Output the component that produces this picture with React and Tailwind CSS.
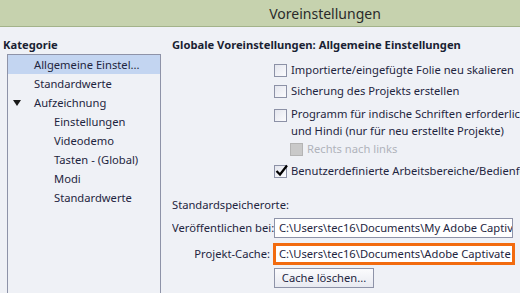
import React from 'react';

const font = { fontFamily: '"Noto Sans", "Open Sans", sans-serif' };

const Check = ({ checked, disabled }) => (
    <span
        className={`block relative shrink-0 w-[13px] h-[13px] border ${disabled ? 'border-[#b4b4b4] bg-[#c9c9c9]' : 'border-[#8c91a6] bg-gradient-to-br from-[#e4e6ee] to-[#fbfbfd]'}`}
    >
        {checked && (
            <svg className="absolute -left-[1px] -top-[3px]" width="15" height="15" viewBox="0 0 15 15">
                <path d="M2.5 8 L6 11.5 L13 2.5" fill="none" stroke="#000" strokeWidth="2.2" />
            </svg>
        )}
    </span>
);

const Tree = [
    { label: 'Allgemeine Einstel...', indent: 'pl-[26px]', selected: true },
    { label: 'Standardwerte', indent: 'pl-[26px]' },
    { label: 'Aufzeichnung', indent: 'pl-[26px]', open: true },
    { label: 'Einstellungen', indent: 'pl-[46px]' },
    { label: 'Videodemo', indent: 'pl-[46px]' },
    { label: 'Tasten - (Global)', indent: 'pl-[46px]' },
    { label: 'Modi', indent: 'pl-[46px]' },
    { label: 'Standardwerte', indent: 'pl-[46px]' },
];

export default function App() {
    return (
        <div className="w-[520px] h-[293px] overflow-hidden bg-[#eff1f6] text-[11.2px] text-[#1e2540] flex flex-col" style={font}>
            {/* title bar */}
            <div className="h-[27px] shrink-0 bg-[#c6d2ae] border-b border-[#a3b38a] flex items-center justify-center pl-[130px]">
                <span className="text-[14px] text-[#2a2a2a]">Voreinstellungen</span>
            </div>

            <div className="flex flex-1 min-h-0">
                {/* left: categories */}
                <div className="w-[172px] shrink-0 flex flex-col pl-[3px] pt-[9px]">
                    <div className="font-bold h-[18px] leading-[18px] text-[#1a1f33]">Kategorie</div>
                    <div className="ml-[4px] w-[154px] flex-1 border border-[#8e93a8] border-b-0">
                        {Tree.map((item, i) => (
                            <div
                                key={i}
                                className={`relative h-[19px] leading-[19px] whitespace-nowrap ${item.indent} ${item.selected ? 'bg-[#c3d5f1]' : ''}`}
                            >
                                {item.open && (
                                    <svg className="absolute left-[5px] top-[7px]" width="8" height="6" viewBox="0 0 8 6">
                                        <path d="M0 0 H8 L4 6 Z" fill="#1a1a1a" />
                                    </svg>
                                )}
                                {item.label}
                            </div>
                        ))}
                    </div>
                </div>

                {/* right: settings */}
                <div className="flex-1 min-w-0 overflow-hidden pt-[9px] whitespace-nowrap">
                    <div className="font-bold h-[18px] leading-[18px] text-[#1a1f33]">Globale Voreinstellungen: Allgemeine Einstellungen</div>

                    <div className="pl-[102px] pt-[6px] flex flex-col">
                        <div className="h-[21px] flex items-center gap-[4px]">
                            <Check />
                            <span>Importierte/eingefügte Folie neu skalieren</span>
                        </div>
                        <div className="h-[21px] flex items-center gap-[4px]">
                            <Check />
                            <span>Sicherung des Projekts erstellen</span>
                        </div>
                        <div className="flex items-start gap-[4px] pt-[3px]">
                            <span className="flex pt-[4px]"><Check /></span>
                            <div className="leading-[17px]">
                                <div>Programm für indische Schriften erforderlich – Bengali, Gujarati</div>
                                <div>und Hindi (nur für neu erstellte Projekte)</div>
                            </div>
                        </div>
                        <div className="h-[20px] flex items-center gap-[4px] pl-[16px]">
                            <Check disabled />
                            <span className="text-[#b0b3bb]">Rechts nach links</span>
                        </div>
                        <div className="h-[24px] flex items-center gap-[4px]">
                            <Check checked />
                            <span>Benutzerdefinierte Arbeitsbereiche/Bedienfelder zurücksetzen</span>
                        </div>
                    </div>

                    <div className="pt-[13px] h-[18px] leading-[18px] box-content">Standardspeicherorte:</div>

                    <div className="flex items-center mt-[3px] h-[22px]">
                        <span className="w-[102px] shrink-0">Veröffentlichen bei:</span>
                        <div className="w-[239px] h-[20px] border border-[#8e93a8] bg-white pl-[4px] leading-[18px] overflow-hidden">
                            C:\Users\tec16\Documents\My Adobe Captivate Projects
                        </div>
                    </div>

                    <div className="flex items-center mt-[4px] h-[22px]">
                        <span className="w-[101px] shrink-0 text-right pr-[3px]">Projekt-Cache:</span>
                        <div className="w-[242px] h-[22px] border-[3px] border-[#f26b0f] bg-white pl-[3px] leading-[16px] overflow-hidden">
                            C:\Users\tec16\Documents\Adobe Captivate Cached Projects
                        </div>
                    </div>

                    <div className="pl-[102px] mt-[3px]">
                        <button className="w-[100px] h-[20px] border border-[#8e93a8] bg-gradient-to-b from-[#fbfbfd] to-[#e8eaf1] leading-[18px] text-center">
                            Cache löschen...
                        </button>
                    </div>
                </div>
            </div>
        </div>
    );
}
